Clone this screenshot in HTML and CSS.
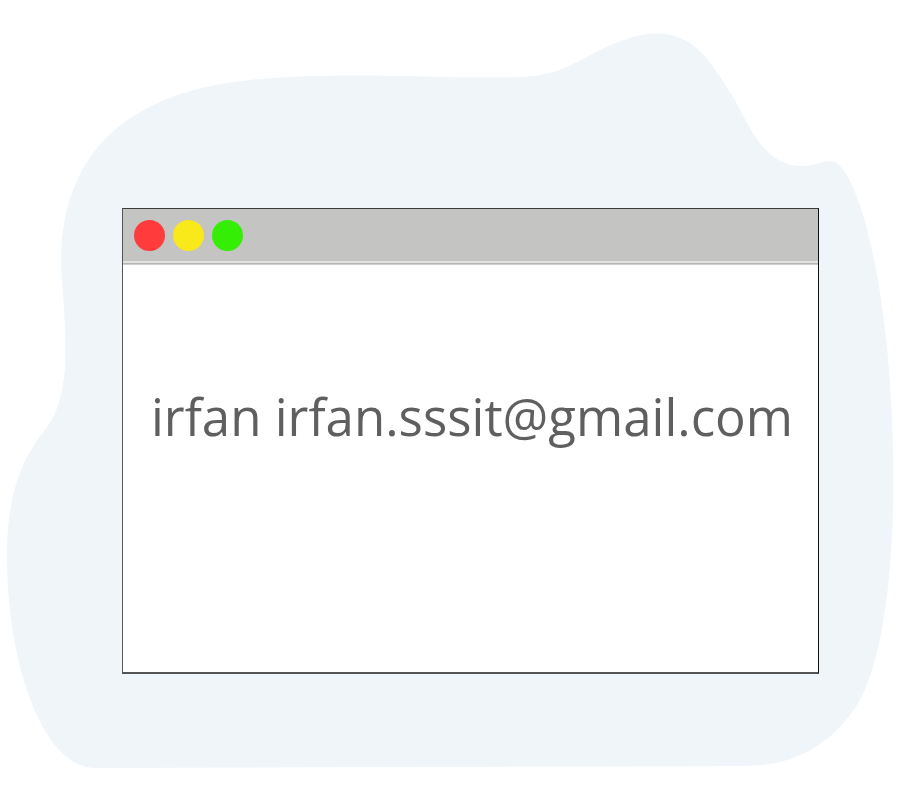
FILE: index.html
```html
<!DOCTYPE html>
<html>
<head>
<meta charset="utf-8">
<link rel="stylesheet" href="styles.css">
</head>
<body>
<div class="stage">
  <svg class="blob" width="900" height="800" viewBox="0 0 900 800" aria-hidden="true">
    <path d="M 95 768 C 45 768 8 670 7 560 C 6 490 25 455 45 430 C 72 395 66 340 62 280 C 55 180 100 95 250 80 C 340 70 470 80 520 77 C 560 75 570 65 600 50 C 630 35 650 32 665 34 C 700 38 715 70 735 100 C 755 140 770 165 800 166 C 820 166 825 158 835 162 C 860 175 890 290 893 450 C 896 580 880 680 850 715 C 820 755 780 766 745 766 Z" fill="#f0f5fa"/>
  </svg>
  <div class="window">
    <div class="titlebar">
      <span class="dot red"></span>
      <span class="dot yellow"></span>
      <span class="dot green"></span>
    </div>
    <div class="content">
      <p class="email">irfan irfan.sssit@gmail.com</p>
    </div>
  </div>
</div>
</body>
</html>
```
FILE: styles.css
```css
html, body {
  margin: 0;
  padding: 0;
  background: #ffffff;
}
.stage {
  position: relative;
  width: 900px;
  height: 800px;
  overflow: hidden;
  display: flex;
  flex-direction: column;
  padding: 208px 0 0 122px;
  box-sizing: border-box;
}
.blob {
  position: absolute;
  left: 0;
  top: 0;
  z-index: 0;
}
.window {
  position: relative;
  z-index: 1;
  width: 697px;
  height: 466px;
  box-sizing: border-box;
  background: #ffffff;
  border-top: 1px solid #3a3a3a;
  border-left: 1px solid #555555;
  border-right: 1px solid #111111;
  border-bottom: 2px solid #555555;
  display: flex;
  flex-direction: column;
}
.titlebar {
  height: 52px;
  background: #c4c4c2;
  border-bottom: 2px solid #e2e2de;
  box-shadow: 0 1px 0 #b4b4b2, 0 2px 0 #cfcfcf;
  display: flex;
  align-items: center;
  gap: 8px;
  padding: 0 0 0 11px;
  flex: none;
}
.dot {
  width: 31px;
  height: 31px;
  border-radius: 50%;
  display: block;
}
.red { background: #ff3b3b; }
.yellow { background: #f9e81a; }
.green { background: #34ee06; }
.content {
  flex: 1;
  display: flex;
  justify-content: center;
}
.email {
  margin: 123px 0 0 3px;
  font-family: "Comic Sans MS", "Open Sans", sans-serif;
  font-size: 51px;
  line-height: 60px;
  color: #5f5f5f;
  white-space: nowrap;
}
```
